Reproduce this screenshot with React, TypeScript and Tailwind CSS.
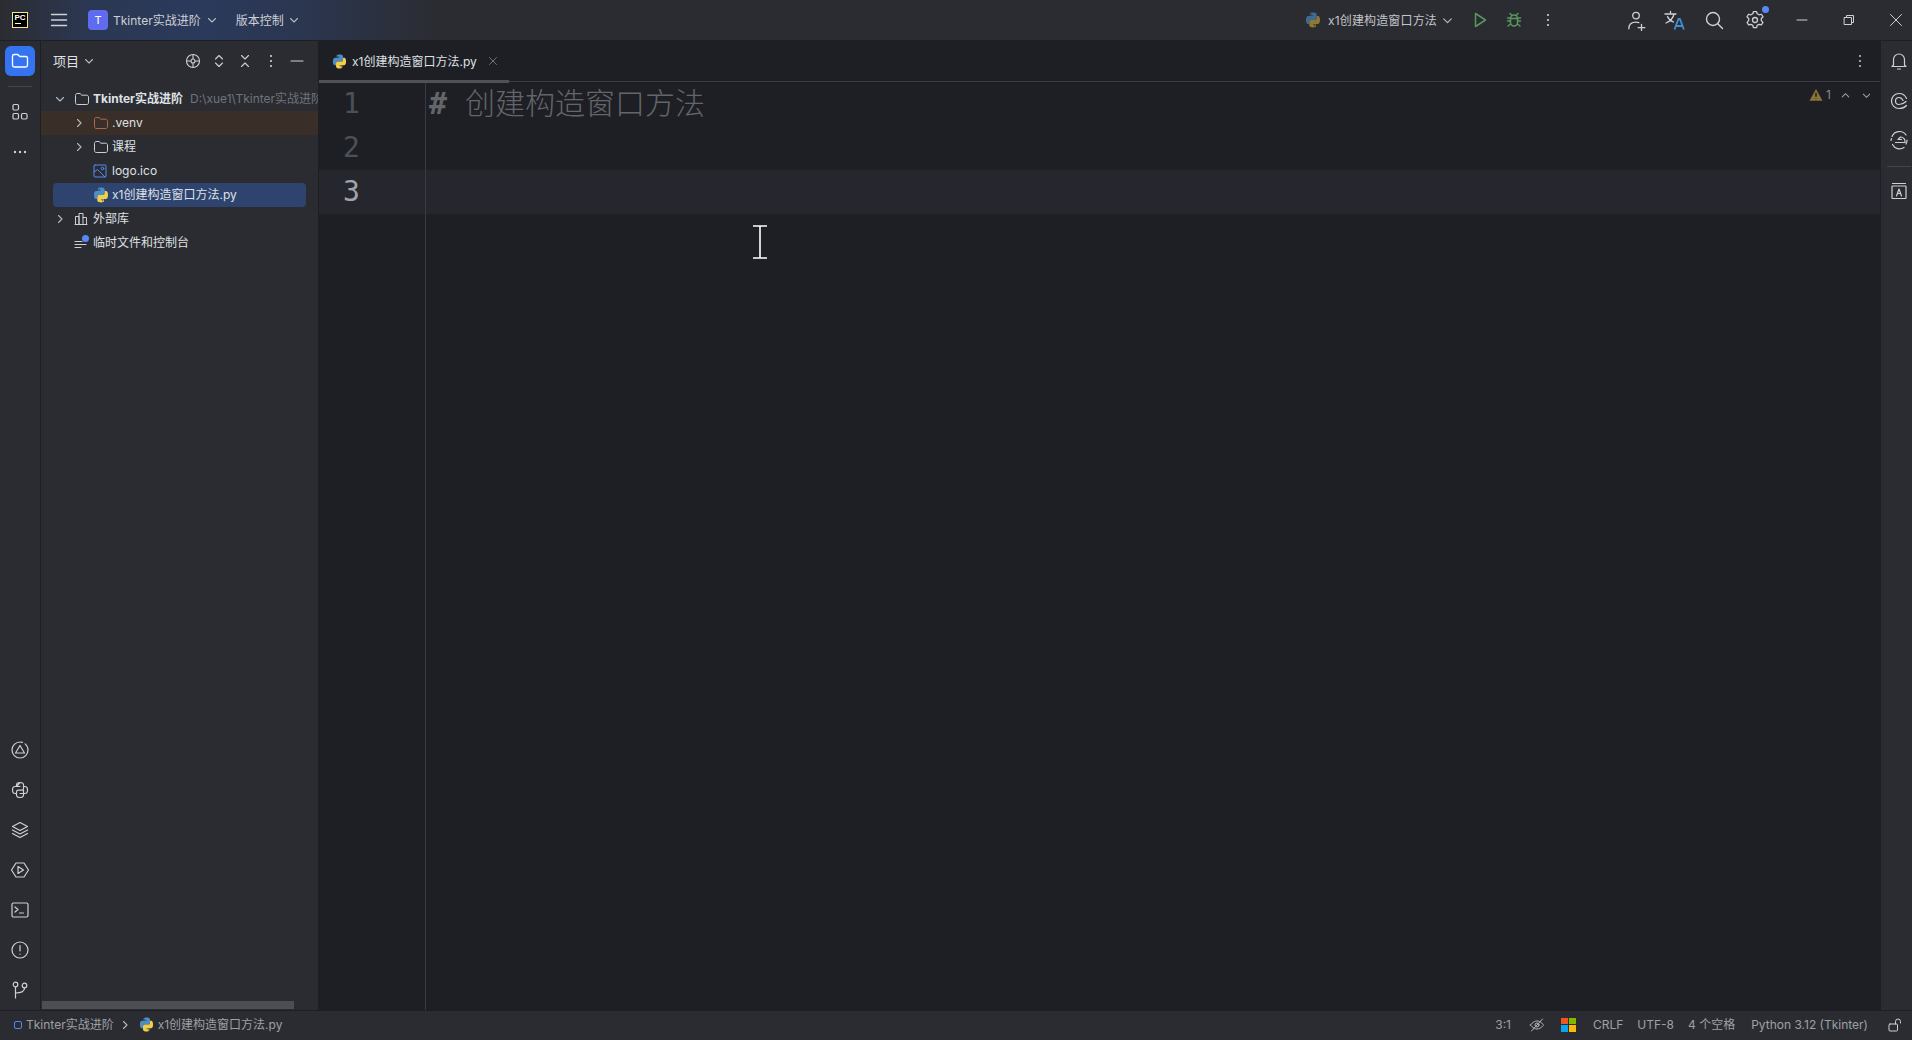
import type { ReactNode } from 'react'

const FONT = 'font-["Inter","Noto_Sans_CJK_SC",sans-serif]'

const Icon = ({
  children,
  size = 20,
  box = 20,
  color = '#ced0d6',
  width = 1.2,
  className = '',
}: {
  children: ReactNode
  size?: number
  box?: number
  color?: string
  width?: number
  className?: string
}) => (
  <svg
    width={size}
    height={size}
    viewBox={`0 0 ${box} ${box}`}
    fill="none"
    stroke={color}
    strokeWidth={width}
    strokeLinecap="round"
    strokeLinejoin="round"
    className={`shrink-0 ${className}`}
  >
    {children}
  </svg>
)

const Python = ({ size = 15, dim = false }: { size?: number; dim?: boolean }) => (
  <svg width={size} height={size} viewBox="0 0 16 16" className="shrink-0">
    <path
      d="M7.9.6C4.8.6 5 1.9 5 1.9v1.5h3v.5H3.4S1 3.6 1 7.9s2.1 4.1 2.1 4.1h1.2v-2s-.1-2.1 2-2.1h3.4s2 0 2-1.9V2.7S12 .6 7.9.6zM6.2 1.8a.6.6 0 110 1.2.6.6 0 010-1.2z"
      fill={dim ? '#3f6a8f' : '#4b8fc6'}
    />
    <path
      d="M8.1 15.4c3.1 0 2.9-1.3 2.9-1.3v-1.5H8v-.5h4.6S15 12.4 15 8.1 12.9 4 12.9 4h-1.2v2s.1 2.1-2 2.1H6.3s-2 0-2 1.9v3.3S4 15.4 8.1 15.4zm1.7-1.2a.6.6 0 110-1.2.6.6 0 010 1.2z"
      fill={dim ? '#8a7a35' : '#f2cf4a'}
    />
  </svg>
)

const Chevron = ({
  dir = 'down',
  color = '#b4b8bf',
  size = 12,
}: {
  dir?: 'down' | 'right' | 'up'
  color?: string
  size?: number
}) => (
  <Icon size={size} box={12} color={color} width={1.1}>
    {dir === 'down' && <path d="M2.5 4.5 6 8l3.5-3.5" />}
    {dir === 'up' && <path d="M2.5 7.5 6 4l3.5 3.5" />}
    {dir === 'right' && <path d="M4.5 2.5 8 6l-3.5 3.5" />}
  </Icon>
)

const Folder = ({ color = '#ced0d6', size = 16 }: { color?: string; size?: number }) => (
  <Icon size={size} box={16} color={color} width={1}>
    <path d="M1.500 4.200c0-.9.7-1.700 1.600-1.700h3l1.700 1.700h4.900c.9 0 1.800.8 1.800 1.700v5.900c0 .9-.8 1.700-1.700 1.700H3.200c-.9 0-1.700-.8-1.700-1.700z" />
  </Icon>
)

const Dots = ({ vertical = true, color = '#ced0d6' }: { vertical?: boolean; color?: string }) => (
  <svg width="16" height="16" viewBox="0 0 16 16" fill={color} className="shrink-0">
    {vertical ? (
      <>
        <circle cx="8" cy="3" r="1.1" />
        <circle cx="8" cy="8" r="1.1" />
        <circle cx="8" cy="13" r="1.1" />
      </>
    ) : (
      <>
        <circle cx="3" cy="8" r="1.2" />
        <circle cx="8" cy="8" r="1.2" />
        <circle cx="13" cy="8" r="1.2" />
      </>
    )}
  </svg>
)

const TitleBar = () => (
  <div className="flex h-[41px] shrink-0 items-center border-b border-[#1e1f24] bg-[linear-gradient(90deg,#2b2c31_0px,#2b3853_90px,#2b3a5c_200px,#2b3650_300px,#2b2c31_440px)] text-[12px] text-[#ced0d6]">
    <div className="ml-3 flex h-4 w-4 shrink-0 flex-col items-center border border-[#f4e98c] bg-black pt-px">
      <span className="font-['Liberation_Sans',sans-serif] text-[8px] leading-[8px] font-bold text-white">PC</span>
      <span className="mt-px ml-[-5px] h-px w-[6px] bg-white" />
    </div>
    <Icon size={20} className="ml-[21px]" width={1.4}>
      <path d="M2.500 4.500h15M2.500 10h15M2.500 15.500h15" />
    </Icon>
    <div className="ml-[19px] flex h-5 w-5 shrink-0 items-center justify-center rounded-[4px] bg-[#5f6cf0] text-[11px] text-white">T</div>
    <span className="mt-[2px] ml-[5px]">Tkinter实战进阶</span>
    <span className="ml-[5px]"><Chevron /></span>
    <span className="mt-[2px] ml-[18px]">版本控制</span>
    <span className="ml-1"><Chevron /></span>
    <div className="ml-auto flex items-center">
      <Python size={16} dim />
      <span className="mt-[2px] ml-[7px] w-[110px] whitespace-nowrap tracking-[0.15px] text-[#c3c5cb]">x1创建构造窗口方法</span>
      <span className="ml-[3px]"><Chevron size={13} /></span>
      <Icon size={20} color="#57965c" width={1.5} className="ml-[16px]">
        <path d="M5.500 3.500v13l10-6.500z" />
      </Icon>
      <Icon size={20} color="#57965c" width={1.5} className="ml-[14px]">
        <path d="M6.500 8.500a3.500 3.500 0 0 1 7 0v4a3.500 3.500 0 0 1-7 0zM7.500 5 6 3.500M12.500 5 14 3.500M6.500 8H3.500M13.500 8h3M6.500 11h-3M13.500 11h3M6.500 14l-2.500 2M13.500 14l2.500 2M6.500 8.500h7" />
      </Icon>
      <span className="ml-[16px]"><Dots /></span>
      <Icon size={22} className="ml-[69px]">
        <circle cx="10" cy="6" r="3" />
        <path d="M3.500 18c0-4 2.500-6 6.500-6 1 0 1.800.1 2.500.4M15 14v6M12 17h6" />
      </Icon>
      <svg width="22" height="22" viewBox="0 0 22 22" fill="none" className="ml-[16px] shrink-0">
        <path d="M2 5h11M7.500 2.500V5M11 5c-.8 4-3.500 7-8 9M4.500 7.500c1.200 2.800 3.400 4.600 6 5.500" stroke="#ced0d6" strokeWidth="1.300" strokeLinecap="round" />
        <path d="M11.500 20.500 15.500 10h1.400l4 10.500M13 17h6.500" stroke="#3f8fd0" strokeWidth="1.800" />
      </svg>
      <Icon size={20} className="ml-[19px]" width={1.4}>
        <circle cx="9" cy="9" r="6.500" />
        <path d="m14 14 4.500 4.500" />
      </Icon>
      <div className="relative ml-[21px] shrink-0">
        <Icon size={20} width={1.3}>
          <path d="M8.400 2.500h3.200l.6 2.300 1.900 1.100 2.300-.6 1.600 2.700-1.700 1.800v2.200l1.700 1.800-1.600 2.700-2.300-.6-1.900 1.100-.6 2.300H8.400l-.6-2.300-1.900-1.100-2.300.6-1.600-2.700 1.700-1.800V9.800L2 8l1.600-2.700 2.300.6 1.900-1.100z" transform="translate(0 -.8) scale(1 .95)" />
          <circle cx="10" cy="10" r="2.500" />
        </Icon>
        <span className="absolute -top-1 -right-1 h-[7px] w-[7px] rounded-full bg-[#548af7]" />
      </div>
      <Icon size={12} box={12} className="ml-[31px]" width={1}>
        <path d="M1 6h10" />
      </Icon>
      <Icon size={12} box={12} className="ml-[35px]" width={1}>
        <path d="M1.500 3.500h7v7h-7zM3.500 3.500v-2h7v7h-2" />
      </Icon>
      <Icon size={14} box={14} className="mr-[9px] ml-[34px]" width={1}>
        <path d="m1.500 1.500 11 11M12.500 1.500l-11 11" />
      </Icon>
    </div>
  </div>
)

const LeftStrip = () => (
  <div className="flex w-[41px] shrink-0 flex-col items-center border-r border-[#1e1f24] bg-[#2b2c31]">
    <div className="mt-[5px] flex h-[30px] w-[30px] items-center justify-center rounded-md bg-[#3574f0]">
      <Icon size={20} color="#ffffff" width={1.3}>
        <path d="M2.500 5.300c0-1 .8-1.800 1.800-1.800h3.500l2 2h6c1 0 1.700.8 1.700 1.800v6.900c0 1-.8 1.800-1.800 1.800H4.300c-1 0-1.800-.8-1.800-1.800z" />
      </Icon>
    </div>
    <div className="mt-[10px] h-px w-6 bg-[#43454a]" />
    <Icon size={20} className="mt-[15px]" width={1.2}>
      <rect x="3" y="2.500" width="5.500" height="5.500" rx="1.200" />
      <rect x="3" y="11.500" width="5.500" height="5.500" rx="1.200" />
      <rect x="11.500" y="11.500" width="5.500" height="5.500" rx="1.200" />
    </Icon>
    <span className="mt-[22px]"><Dots vertical={false} /></span>
    <div className="mt-auto mb-[10px] flex flex-col items-center gap-5">
      <Icon size={20}>
        <circle cx="10" cy="10" r="8" strokeDasharray="40 3" />
        <path d="M10 5.500 14.500 13h-9z" />
      </Icon>
      <Icon size={20}>
        <path d="M10 2.500c-2.500 0-3.500 1-3.500 2.500v1.500H10M6.500 6.500H5C3.300 6.500 2.500 8 2.500 10s.8 3.500 2.500 3.500h1.500V12c0-1 .8-1.800 1.800-1.800h3.400c1 0 1.800-.8 1.800-1.800V5c0-1.500-1-2.500-3.500-2.500zM13.500 6.500H15c1.700 0 2.500 1.500 2.500 3.500s-.8 3.500-2.500 3.500h-5M13.500 10v5c0 1.500-1 2.500-3.500 2.500S6.500 16.500 6.500 15v-1.500" />
      </Icon>
      <Icon size={20}>
        <path d="M10 2.500 17.500 6.500 10 10.500 2.500 6.500zM2.500 10 10 14l7.500-4M2.500 13.500l7.500 4 7.500-4" />
      </Icon>
      <Icon size={20}>
        <path d="M6 3h8l4.500 7-4.500 7H6l-4.500-7z" />
        <path d="M8 6.500v7l5.500-3.500z" />
      </Icon>
      <Icon size={20}>
        <rect x="2" y="3" width="16" height="14" rx="1.500" />
        <path d="m5 7 3 2.500L5 12M9.500 13h4" />
      </Icon>
      <Icon size={20}>
        <circle cx="10" cy="10" r="8" />
        <path d="M10 5.500v5.500M10 14v.2" />
      </Icon>
      <Icon size={20}>
        <circle cx="5.500" cy="4.500" r="2.300" />
        <circle cx="14.500" cy="5.500" r="2.300" />
        <path d="M5.500 7v11M14.500 8c0 3.500-4 5-9 5" />
      </Icon>
    </div>
  </div>
)

const TreeRow = ({
  indent,
  chevron,
  icon,
  children,
  className = '',
}: {
  indent: number
  chevron?: 'down' | 'right'
  icon: ReactNode
  children: ReactNode
  className?: string
}) => (
  <div className={`flex h-6 shrink-0 items-center ${className}`} style={{ paddingLeft: indent }}>
    <span className="flex w-[20px] shrink-0 items-center">
      {chevron && <Chevron dir={chevron} />}
    </span>
    <span className="flex w-[18px] shrink-0 items-center">{icon}</span>
    <span className="ml-px flex-1 overflow-hidden whitespace-nowrap">{children}</span>
  </div>
)

const ProjectPanel = () => (
  <div className="flex w-[278px] shrink-0 flex-col border-r border-[#1e1f24] bg-[#2b2c31] text-[12px] text-[#dfe1e5]">
    <div className="flex h-10 shrink-0 items-center pr-[13px] pl-3">
      <span className="mt-[2px] text-[13px]">项目</span>
      <span className="ml-1"><Chevron /></span>
      <div className="ml-auto flex items-center gap-2.5">
        <Icon size={16} box={16} width={1.1}>
          <circle cx="8" cy="8" r="6.500" />
          <circle cx="8" cy="8" r="2" />
          <path d="M8 1.500v4M8 10.500v4M1.500 8h4M10.500 8h4" />
        </Icon>
        <Icon size={16} box={16} width={1.1}>
          <path d="m4.500 6 3.500-3.500L11.500 6M4.500 10 8 13.500l3.500-3.500" />
        </Icon>
        <Icon size={16} box={16} width={1.1}>
          <path d="m4.500 2.500 3.500 3.500 3.500-3.500M4.500 13.500 8 10l3.500 3.500" />
        </Icon>
        <Dots />
        <Icon size={16} box={16} width={1.1}>
          <path d="M2 8h12" />
        </Icon>
      </div>
    </div>
    <div className="flex-1 overflow-hidden pt-[6px]">
      <TreeRow indent={13} chevron="down" icon={<Folder />}>
        <span className="font-bold">Tkinter实战进阶</span>
        <span className="ml-[7px] text-[#6f737a]">D:\xue1\Tkinter实战进阶</span>
      </TreeRow>
      <TreeRow indent={32} chevron="right" icon={<Folder color="#a86b50" />} className="bg-[#3a2f28]">
        .venv
      </TreeRow>
      <TreeRow indent={32} chevron="right" icon={<Folder />}>
        课程
      </TreeRow>
      <TreeRow
        indent={32}
        icon={
          <Icon size={14} box={14} color="#548af7" width={1}>
            <rect x="1" y="1" width="12" height="12" rx="1" />
            <circle cx="9.500" cy="4.500" r="1.300" />
            <path d="m1 8 3.500-2.500L12 13" />
          </Icon>
        }
      >
        logo.ico
      </TreeRow>
      <div className="mx-3 h-6 rounded-[4px] bg-[#2e436e]">
        <TreeRow indent={20} icon={<Python size={16} />}>
          x1创建构造窗口方法.py
        </TreeRow>
      </div>
      <TreeRow
        indent={13}
        chevron="right"
        icon={
          <Icon size={14} box={14} width={1}>
            <path d="M1 12.500h12M1.500 12.500v-8h3.500v8M5 12.500V1.500h4v11M9 5.500h3.500v7" />
          </Icon>
        }
      >
        外部库
      </TreeRow>
      <TreeRow
        indent={13}
        icon={
          <span className="relative flex">
            <Icon size={14} box={14} width={1}>
              <path d="M1 5.500h7M1 8.500h11M1 11.500h6" />
            </Icon>
            <span className="absolute -top-px left-[8px] h-[7px] w-[7px] rounded-full bg-[#548af7]" />
          </span>
        }
      >
        临时文件和控制台
      </TreeRow>
    </div>
    <div className="mb-px ml-px h-2 w-[252px] shrink-0 bg-[#4d4e52]" />
  </div>
)

const CodeLine = ({ n, active, children }: { n: number; active?: boolean; children?: ReactNode }) => (
  <div className={`flex h-11 shrink-0 items-center ${active ? 'bg-[#26272e]' : ''}`}>
    <div
      className={`flex h-11 w-[107px] shrink-0 items-center border-r border-[#393b40] pl-[24px] font-['DejaVu_Sans_Mono',monospace] text-[28px] ${
        active ? 'text-[#a1a3ab]' : 'text-[#4b5059]'
      }`}
    >
      {n}
    </div>
    {children}
  </div>
)

const Editor = () => (
  <div className="relative flex min-w-0 flex-1 flex-col bg-[#1e1f24]">
    <div className="flex h-[41px] shrink-0 items-center border-b border-[#393b40] pr-3">
      <div className="relative flex h-[41px] w-[190px] items-center pl-[13px] text-[12px] text-[#dfe1e5]">
        <Python />
        <span className="mt-[2px] ml-[5px]">x1创建构造窗口方法.py</span>
        <Icon size={10} box={10} color="#6f737a" width={1} className="ml-[11px]">
          <path d="m1.500 1.500 7 7M8.500 1.500l-7 7" />
        </Icon>
        <span className="absolute right-0 -bottom-px left-0 h-[3px] bg-[#4e5157]" />
      </div>
      <span className="ml-auto"><Dots color="#b4b8bf" /></span>
    </div>
    <CodeLine n={1}>
      <span className="mb-1 ml-[3px] whitespace-pre font-['DejaVu_Sans_Mono','Noto_Sans_CJK_SC',monospace] text-[30px] leading-none text-[#63656b]">
        <span className="font-bold">#</span>
        <span className="ml-[18px] font-['Noto_Sans_CJK_SC',sans-serif] font-light">创建构造窗口方法</span>
      </span>
    </CodeLine>
    <CodeLine n={2} />
    <CodeLine n={3} active />
    <div className="flex-1">
      <div className="h-full w-[107px] border-r border-[#393b40]" />
    </div>
    <div className="absolute top-[45px] right-[8px] flex items-center text-[12px] text-[#868a91]">
      <svg width="14" height="14" viewBox="0 0 12 12" className="shrink-0">
        <path d="M6 .8 11.600 11H.4z" fill="#8a7339" />
        <path d="M6 4v3.500M6 9v.5" stroke="#1e1f24" strokeWidth="1.300" />
      </svg>
      <span className="ml-[3px]">1</span>
      <span className="ml-[9px]"><Chevron dir="up" color="#9da0a8" size={11} /></span>
      <span className="ml-[10px]"><Chevron color="#9da0a8" size={11} /></span>
    </div>
    <svg width="16" height="34" viewBox="0 0 16 34" className="absolute top-[184px] left-[433px]" stroke="#ffffff" strokeWidth="1.600" fill="none">
      <path d="M1 1h14M8 1v32M1 33h14" />
    </svg>
  </div>
)

const RightStrip = () => (
  <div className="flex w-[32px] shrink-0 flex-col items-center border-l border-[#1e1f24] bg-[#2b2c31] pl-[4px]">
    <Icon size={20} className="mt-[10px]" width={1.2}>
      <path d="M4.500 14V8.500a5.500 5.500 0 0 1 11 0V14l1.500 1.500H3zM8.500 18h3" />
    </Icon>
    <Icon size={20} className="mt-[20px]" width={1.2}>
      <path d="M17.500 7.500C16 4 13 2.500 10 2.500a7.500 7.500 0 0 0-7.500 7.500c0 4.500 3.500 7.500 7.500 7.500 3 0 5.500-1 7.500-3M14 9.500c-.8-2-2.500-3-4-3a3.500 3.500 0 0 0-3.500 3.500c0 2 1.500 3.500 3.500 3.500 2.500 0 5-1 7-3" />
    </Icon>
    <Icon size={20} className="mt-[19px]" width={1.2}>
      <path d="M3 6.500A8 8 0 0 1 17 5M18 10a8 8 0 0 1-1 4M3.500 14.500A8 8 0 0 0 15 17.500M2 10.500a8 8 0 0 1 .5-2" />
      <path d="M6.500 12.500H16c.5-3-1.500-5.500-4.500-5.500L9 9.500h3.500" />
    </Icon>
    <div className="mt-[16px] h-px w-6 bg-[#43454a]" />
    <Icon size={20} className="mt-[14px]" width={1.2}>
      <path d="M3.500 2.500h13M3.500 5h13a.5.5 0 0 1 .5.5v11.500a.5.5 0 0 1-.5.5h-13a.5.5 0 0 1-.5-.5V5.500a.5.5 0 0 1 .5-.5z" />
      <path d="m7.500 15 2.500-7 2.500 7M8.500 12.500h3" />
    </Icon>
  </div>
)

const StatusBar = () => (
  <div className="flex h-[30px] shrink-0 items-center border-t border-[#1e1f24] bg-[#2b2c31] pb-[2px] text-[12px] text-[#9da0a8]">
    <span className="ml-[14px] h-[8px] w-[8px] rounded-[2px] border border-[#548af7]" />
    <span className="ml-1">Tkinter实战进阶</span>
    <span className="ml-[5px]"><Chevron dir="right" /></span>
    <span className="ml-2"><Python /></span>
    <span className="ml-1">x1创建构造窗口方法.py</span>
    <div className="ml-auto flex items-center">
      <span>3:1</span>
      <Icon size={16} box={16} color="#b4b8bf" width={1} className="ml-[18px]">
        <path d="M1.500 8S4 4 8 4s6.500 4 6.500 4S12 12 8 12 1.500 8 1.500 8z" />
        <circle cx="8" cy="8" r="2" />
        <path d="M2.500 14 13.500 2" />
      </Icon>
      <div className="ml-[16px] grid h-[14px] w-[15px] shrink-0 grid-cols-2 gap-px">
        <span className="bg-[#f25325]" />
        <span className="bg-[#7fba00]" />
        <span className="bg-[#05a6f0]" />
        <span className="bg-[#ffba08]" />
      </div>
      <span className="ml-[17px]">CRLF</span>
      <span className="ml-[14px]">UTF-8</span>
      <span className="ml-[14px]">4 个空格</span>
      <span className="ml-[16px]">Python 3.12 (Tkinter)</span>
      <Icon size={16} box={16} color="#ced0d6" width={1} className="mr-[9px] ml-[19px]">
        <rect x="2" y="7" width="8.500" height="7" rx="1" />
        <path d="M8.500 7V4.500a2.500 2.500 0 0 1 5 0V6" />
      </Icon>
    </div>
  </div>
)

export default function App() {
  return (
    <div className={`flex h-screen w-screen flex-col overflow-hidden bg-[#1e1f24] ${FONT}`}>
      <TitleBar />
      <div className="flex min-h-0 flex-1">
        <LeftStrip />
        <ProjectPanel />
        <Editor />
        <RightStrip />
      </div>
      <StatusBar />
    </div>
  )
}
